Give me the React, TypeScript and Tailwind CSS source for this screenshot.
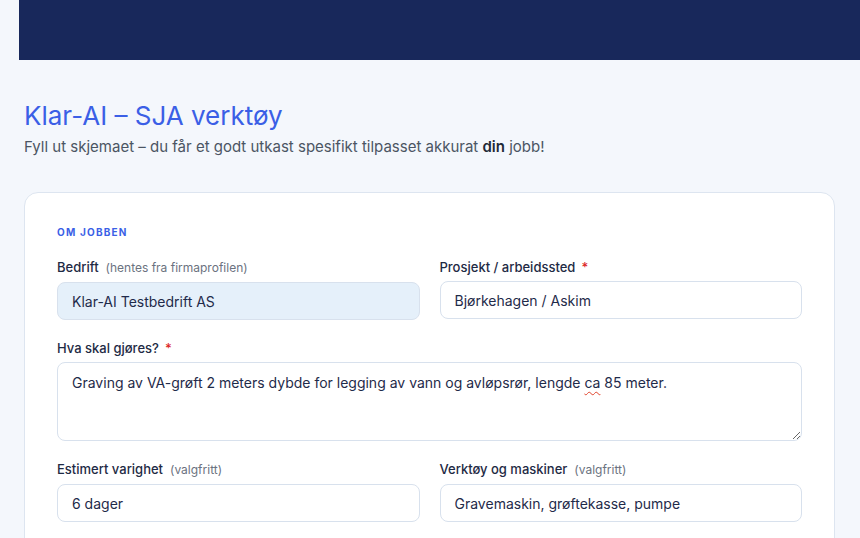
import React from "react";

const font = { fontFamily: "Inter, 'Noto Sans', sans-serif" };

function Label({
    text,
    hint,
    required,
}: {
    text: string;
    hint?: string;
    required?: boolean;
}) {
    return (
        <div className="mb-1 flex items-baseline text-[13px] leading-5 font-medium text-[#1e2a44]">
            <span>{text}</span>
            {hint && (
                <span className="ml-[7px] text-[12px] font-normal text-[#6b7280]">
                    {hint}
                </span>
            )}
            {required && <span className="ml-[6px] text-[#dc2626]">*</span>}
        </div>
    );
}

function Input({ value, muted }: { value: string; muted?: boolean }) {
    return (
        <div
            className={`flex h-[38px] items-center rounded-lg border border-[#d8e1ed] px-[14px] text-[14px] text-[#1f2b4a] ${
                muted ? "bg-[#e5f0fa]" : "bg-white"
            }`}
        >
            {value}
        </div>
    );
}

export default function App() {
    return (
        <div className="min-h-screen bg-[#f4f7fc]" style={font}>
            {/* ── Top bar ─────────────────────────────── */}
            <div className="ml-[19px] h-[60px] bg-[#18285b]" />

            <main className="pl-6 pr-[25px] pt-10">
                <h1 className="text-[26px] leading-8 text-[#3b5fe6]">
                    Klar-AI – SJA verktøy
                </h1>
                <p className="mt-1 text-[15px] leading-[22px] text-[#4b5563]">
                    Fyll ut skjemaet – du får et godt utkast spesifikt tilpasset akkurat{" "}
                    <b className="font-semibold text-[#1f2937]">din</b> jobb!
                </p>

                {/* ── Form card ───────────────────────── */}
                <section className="mt-[34px] rounded-[14px] border border-[#dde5f0] bg-white px-8 pt-[31px] pb-8">
                    <h2 className="mb-[17px] text-[10px] leading-4 font-bold tracking-[0.12em] text-[#3b5fe6]">
                        OM JOBBEN
                    </h2>

                    <div className="grid grid-cols-2 gap-x-5 gap-y-[18px]">
                        <div>
                            <Label text="Bedrift" hint="(hentes fra firmaprofilen)" />
                            <Input value="Klar-AI Testbedrift AS" muted />
                        </div>
                        <div>
                            <Label text="Prosjekt / arbeidssted" required />
                            <Input value="Bjørkehagen / Askim" />
                        </div>

                        <div className="col-span-2">
                            <Label text="Hva skal gjøres?" required />
                            <div className="h-[79px] resize-y overflow-auto rounded-lg border border-[#d8e1ed] bg-white px-[14px] py-[9px] text-[14px] leading-[22px] text-[#1f2b4a]">
                                Graving av VA-grøft 2 meters dybde for legging av vann og
                                avløpsrør, lengde{" "}
                                <span className="underline decoration-[#e0442c] decoration-wavy decoration-1 underline-offset-[3px]">
                                    ca
                                </span>{" "}
                                85 meter.
                            </div>
                        </div>

                        <div>
                            <Label text="Estimert varighet" hint="(valgfritt)" />
                            <Input value="6 dager" />
                        </div>
                        <div>
                            <Label text="Verktøy og maskiner" hint="(valgfritt)" />
                            <Input value="Gravemaskin, grøftekasse, pumpe" />
                        </div>
                    </div>
                </section>
            </main>
        </div>
    );
}
